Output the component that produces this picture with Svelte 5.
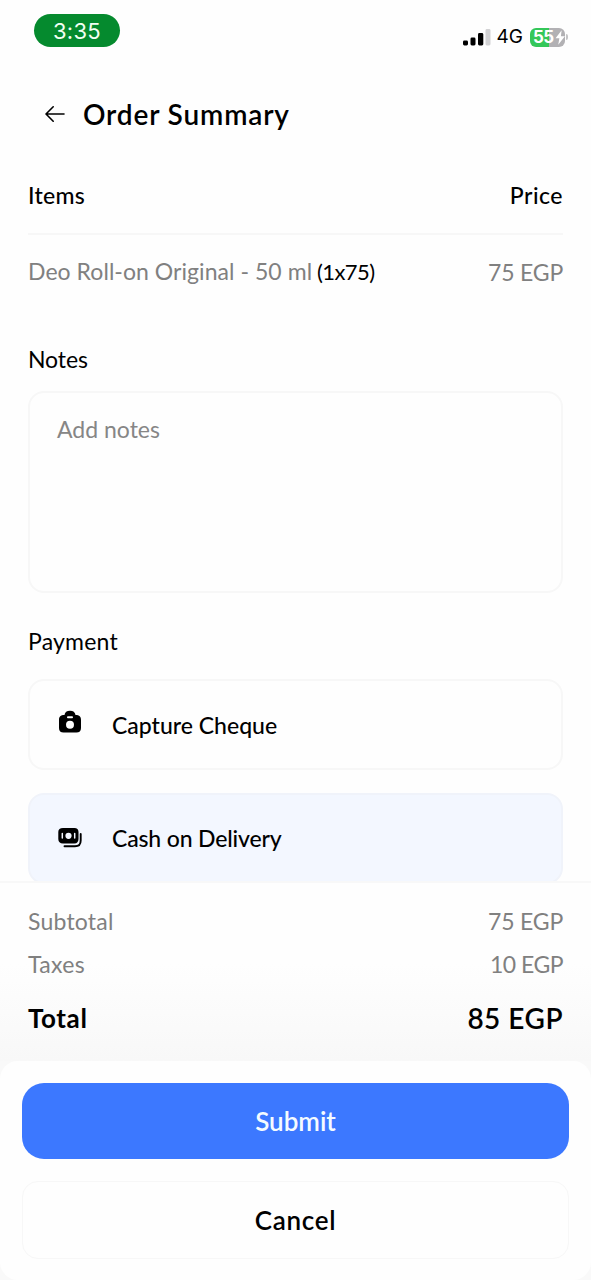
<script>
  let notes = '';
  let selected = 'cash';

  const items = [{ name: 'Deo Roll-on Original - 50 ml', qty: 1, price: 75 }];
  const methods = [
    { id: 'cheque', label: 'Capture Cheque' },
    { id: 'cash', label: 'Cash on Delivery' }
  ];

  const taxes = 10;
  $: subtotal = items.reduce((sum, i) => sum + i.qty * i.price, 0);
  $: total = subtotal + taxes;
</script>

<div class="screen">
  <div class="status">
    <span class="time">3:35</span>
    <div class="indicators">
      <svg class="signal" width="28" height="17" viewBox="0 0 28 17">
        <rect x="0" y="11.5" width="5" height="5" rx="1.4" />
        <rect x="7.5" y="8.5" width="5" height="8" rx="1.4" />
        <rect x="15" y="4" width="5.3" height="12.500" rx="1.4" />
        <rect x="22.500" y="0" width="5" height="16.500" rx="1.4" fill="#d2d2d4" />
      </svg>
      <span class="network">4G</span>
      <div class="battery">
        <span class="level">55</span>
        <svg width="11" height="15" viewBox="0 0 11 15">
          <path d="M7 0 0.6 8.4H4.6L3.4 15 10.4 6.2H6.2Z" fill="#fff" />
        </svg>
      </div>
      <span class="cap"></span>
    </div>
  </div>

  <header>
    <svg width="20" height="18" viewBox="0 0 20 18" fill="none" stroke="#000" stroke-width="1.6" stroke-linecap="round" stroke-linejoin="round">
      <path d="M19 9H1.2M8.2 1.8 1 9l7.2 7.2" />
    </svg>
    <h1>Order Summary</h1>
  </header>

  <main>
    <div class="row head">
      <span class="items-label">Items</span>
      <span class="price-label">Price</span>
    </div>
    {#each items as item}
      <div class="row item">
        <span><span class="name">{item.name}</span> <span class="qty">({item.qty}x{item.price})</span></span>
        <span class="amount">{item.price} EGP</span>
      </div>
    {/each}

    <h2 class="notes-title">Notes</h2>
    <textarea bind:value={notes} placeholder="Add notes"></textarea>

    <h2 class="payment-title">Payment</h2>
    {#each methods as method}
      <button class="method {method.id}" class:active={selected === method.id} on:click={() => (selected = method.id)}>
        {#if method.id === 'cheque'}
          <svg width="26" height="26" viewBox="0 0 26 26">
            <path d="M7.5 6C7.8 3.2 9.8 1.7 13 1.7S18.2 3.2 18.5 6C22.5 6 24 7.6 24 11v8c0 3.2-1.6 4.6-4.6 4.6H6.6C3.6 23.6 2 22.2 2 19v-8c0-3.4 1.5-5 5.5-5Z" />
            <rect x="10" y="7.3" width="6" height="1.9" rx="0.9" fill="#fff" />
            <circle cx="13" cy="15.7" r="4" fill="#fff" />
          </svg>
        {:else}
          <svg width="26" height="26" viewBox="0 0 26 26">
            <path d="M6 4h11.5C20 4 21.5 5.5 21.5 8v7c0 2.5-1.5 4.5-4 4.5H6c-3 0-4.7-1.7-4.7-4.5V8C1.300 5.5 3 4 6 4Z" />
            <path d="M23.7 10v6.5c0 3.7-2 5.8-5.7 5.8H7.5" fill="none" stroke="#000" stroke-width="1.9" stroke-linecap="round" />
            <circle cx="11.5" cy="11.8" r="3.1" fill="#f3f7ff" />
            <path d="M5.3 9.500v4.6M17.7 9.5v4.6" stroke="#f3f7ff" stroke-width="1.5" stroke-linecap="round" />
          </svg>
        {/if}
        <span>{method.label}</span>
      </button>
    {/each}
  </main>

  <section class="totals">
    <div class="row"><span class="subtotal">Subtotal</span><span class="amount">{subtotal} EGP</span></div>
    <div class="row"><span class="taxes">Taxes</span><span class="amount ten">{taxes} EGP</span></div>
    <div class="row total"><span>Total</span><span class="sum">{total} EGP</span></div>
  </section>

  <footer>
    <button class="submit">Submit</button>
    <button class="cancel">Cancel</button>
  </footer>
</div>

<style>
  :global(body) {
    background: #fefefe;
  }

  .screen {
    display: flex;
    flex-direction: column;
    height: 1280px;
    overflow: hidden;
    font-family: Lato, sans-serif;
    font-size: 23px;
    line-height: 28px;
    color: #000;
  }

  .status {
    display: flex;
    justify-content: space-between;
    height: 48px;
    padding: 14px 23px 0 34px;
    box-sizing: border-box;
    flex: none;
  }

  .time {
    width: 86px;
    height: 33px;
    border-radius: 17px;
    background: #058a2e;
    color: #f2fff2;
    font: 22px/34px Inter, sans-serif;
    letter-spacing: 0.3px;
    text-align: center;
  }

  .indicators {
    display: flex;
    align-items: center;
    height: 46px;
  }

  .network {
    margin: 0 7px 0 6px;
    font: 19px/24px Inter, sans-serif;
  }

  .battery {
    display: flex;
    align-items: center;
    gap: 1px;
    width: 35px;
    height: 19px;
    padding-left: 3px;
    box-sizing: border-box;
    border-radius: 6px;
    background: linear-gradient(90deg, #34c759 0 55%, #b2b1b4 55%);
  }

  .level {
    color: #fff;
    font: 700 17px/19px Inter, sans-serif;
    letter-spacing: -0.6px;
  }

  .cap {
    width: 2px;
    height: 6px;
    margin-left: 1px;
    border-radius: 0 2px 2px 0;
    background: #c4c4c6;
  }

  header {
    display: flex;
    align-items: flex-start;
    height: 104px;
    padding: 30px 0 0 45px;
    box-sizing: border-box;
    flex: none;
  }

  header svg {
    margin-top: 27px;
  }

  h1 {
    margin: 18px 0 0 18px;
    font-size: 28px;
    font-weight: 600;
    line-height: 36px;
    letter-spacing: 0.85px;
  }

  main {
    display: flex;
    flex-direction: column;
    height: 729px;
    padding: 0 28px;
    box-sizing: border-box;
    overflow: hidden;
    flex: none;
  }

  .row {
    display: flex;
    justify-content: space-between;
    align-items: center;
  }

  .head {
    height: 83px;
    padding-top: 4px;
    box-sizing: border-box;
    border-bottom: 2px solid #f7f7f7;
    font-weight: 500;
    flex: none;
  }

  .items-label {
    letter-spacing: 0.3px;
  }

  .price-label {
    letter-spacing: 0.5px;
  }

  .item {
    height: 73px;
    margin-bottom: 2px;
    flex: none;
  }

  .name {
    color: #808080;
    letter-spacing: 0.05px;
  }

  .qty {
    margin-left: -1px;
    font-size: 22px;
    letter-spacing: -0.6px;
  }

  .amount {
    color: #808080;
    letter-spacing: -0.2px;
  }

  .ten {
    letter-spacing: -0.5px;
  }

  h2 {
    font-size: 23px;
    font-weight: 400;
    flex: none;
  }

  .notes-title {
    margin: 35px 0 0;
    letter-spacing: -0.1px;
  }

  textarea {
    height: 202px;
    margin: 18px 0 0;
    padding: 22px 27px;
    box-sizing: border-box;
    border: 2px solid #f7f7f7;
    border-radius: 16px;
    background: transparent;
    font: 23px/28px Lato, sans-serif;
    resize: none;
    outline: none;
    flex: none;
  }

  textarea::placeholder {
    color: #868686;
    opacity: 1;
  }

  .payment-title {
    margin: 34px 0 1px;
    letter-spacing: 0.2px;
  }

  button {
    font-family: inherit;
    color: #000;
    cursor: pointer;
  }

  .method {
    display: flex;
    align-items: center;
    gap: 29px;
    height: 91px;
    padding: 0 27px;
    border: 2px solid #f7f7f7;
    border-radius: 16px;
    background: transparent;
    font-size: 23px;
    font-weight: 500;
    flex: none;
  }

  .method svg {
    margin-top: -5px;
  }

  .cheque {
    margin: 23px 0;
  }

  .cash {
    padding-bottom: 2px;
    letter-spacing: -0.15px;
  }

  .cash svg {
    margin-top: -1px;
  }

  .active {
    border-color: #f0f3fa;
    background: #f3f7ff;
  }

  .totals {
    height: 180px;
    padding: 17px 28px 0;
    box-sizing: border-box;
    border-top: 2px solid #f8f8f8;
    background: linear-gradient(#fefefe 45%, #f8f8f8);
    flex: none;
  }

  .totals .row {
    height: 43px;
    margin-top: -1px;
    margin-bottom: 1px;
  }

  .subtotal {
    letter-spacing: 0.2px;
    color: #808080;
  }

  .taxes {
    letter-spacing: 0.3px;
    color: #808080;
  }

  .totals .total {
    height: 66px;
    font-size: 26px;
    font-weight: 700;
    letter-spacing: 0.6px;
  }

  .sum {
    font-size: 28px;
    font-weight: 600;
    letter-spacing: 0.5px;
  }

  footer {
    display: flex;
    flex-direction: column;
    gap: 22px;
    height: 219px;
    padding: 22px 22px 0;
    box-sizing: border-box;
    border-radius: 18px;
    background: #fefefe;
    box-shadow: 0 0 0 20px #f9f9f9;
    clip-path: inset(0);
    flex: none;
  }

  footer button {
    border: none;
    border-radius: 22px;
    font-size: 26px;
    font-weight: 600;
  }

  .submit {
    height: 76px;
    background: #3c78ff;
    color: #f5fbff;
  }

  footer .cancel {
    height: 78px;
    border: 1px solid #f7f7f7;
    border-radius: 16px;
    background: transparent;
    letter-spacing: 0.7px;
  }
</style>
